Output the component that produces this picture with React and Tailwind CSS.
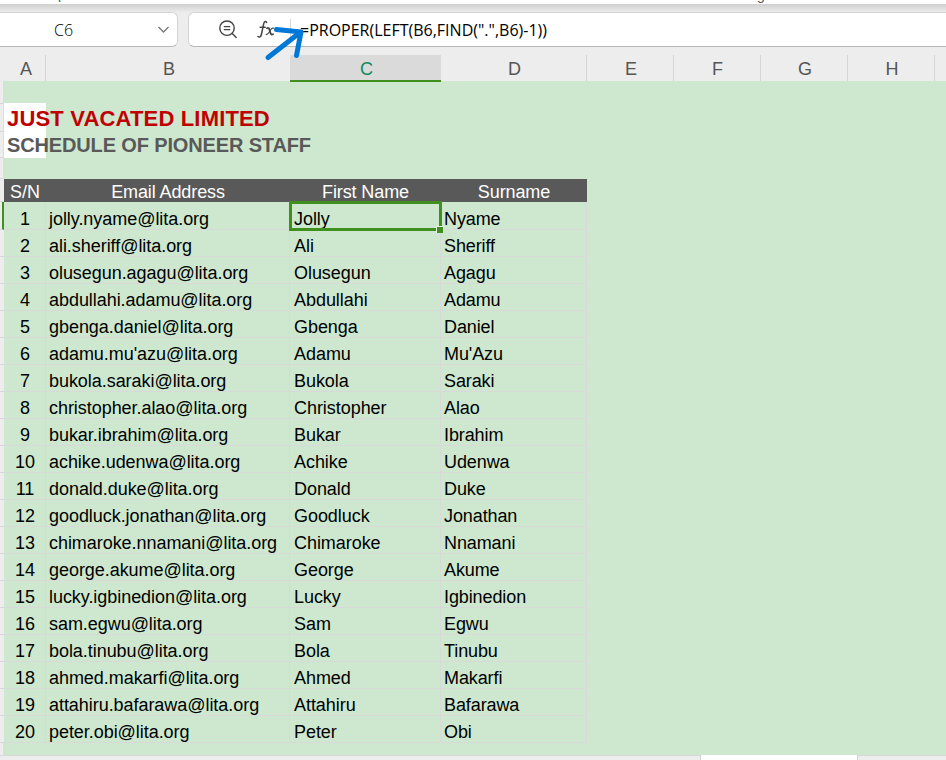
import React from "react";

const staff = [
  ["jolly.nyame", "Jolly", "Nyame"],
  ["ali.sheriff", "Ali", "Sheriff"],
  ["olusegun.agagu", "Olusegun", "Agagu"],
  ["abdullahi.adamu", "Abdullahi", "Adamu"],
  ["gbenga.daniel", "Gbenga", "Daniel"],
  ["adamu.mu'azu", "Adamu", "Mu'Azu"],
  ["bukola.saraki", "Bukola", "Saraki"],
  ["christopher.alao", "Christopher", "Alao"],
  ["bukar.ibrahim", "Bukar", "Ibrahim"],
  ["achike.udenwa", "Achike", "Udenwa"],
  ["donald.duke", "Donald", "Duke"],
  ["goodluck.jonathan", "Goodluck", "Jonathan"],
  ["chimaroke.nnamani", "Chimaroke", "Nnamani"],
  ["george.akume", "George", "Akume"],
  ["lucky.igbinedion", "Lucky", "Igbinedion"],
  ["sam.egwu", "Sam", "Egwu"],
  ["bola.tinubu", "Bola", "Tinubu"],
  ["ahmed.makarfi", "Ahmed", "Makarfi"],
  ["attahiru.bafarawa", "Attahiru", "Bafarawa"],
  ["peter.obi", "Peter", "Obi"],
];

const columns = [
  ["A", "w-[46px] pl-[7px]"],
  ["B", "w-[244px] pl-[2px]"],
  ["C", "w-[151px] pl-[2px]"],
  ["D", "w-[146px] pl-[2px]"],
  ["E", "w-[87px] pl-[2px]"],
  ["F", "w-[87px] pl-px"],
  ["G", "w-[87px] pl-[2px]"],
  ["H", "w-[87px] pl-[2px]"],
];

function FormulaBar() {
  return (
    <div className="relative flex h-[43px] gap-[10px] bg-gradient-to-b from-[#cfcfcf] via-[#ededed] via-20% to-[#ededed] pt-2">
      <div className="flex h-[35px] w-[178px] items-center rounded-r-[6px] border border-l-0 border-[#d4d4d4] border-b-[#b8b8b8] bg-white pl-[54px] pr-[7px]">
        <span className="flex-1 font-['Open_Sans',sans-serif] text-[16px] font-light text-black">C6</span>
        <svg width="13" height="9" viewBox="0 0 13 9" fill="none" stroke="#777" strokeWidth="1.3">
          <path d="M1.5 2 6.5 7 11.5 2" />
        </svg>
      </div>
      <div className="flex h-[35px] flex-1 items-center rounded-l-[6px] border border-r-0 border-[#d4d4d4] border-b-[#b8b8b8] bg-white pl-[29px]">
        <svg width="20" height="20" viewBox="0 0 20 20" fill="none" stroke="#444" strokeWidth="1.4" strokeLinecap="round">
          <circle cx="9" cy="8.2" r="7.2" />
          <path d="M6.3 6.6h5.4M6.3 9.6h5.4M14.2 13.6l4 4" />
        </svg>
        <svg className="ml-[19px]" width="18" height="21" viewBox="0 0 18 21" fill="none" stroke="#444" strokeLinecap="round">
          <path d="M9.6 3.4C9.3 2 7.4 1.9 6.8 4.4L4.4 15.5C3.8 18.2 2.2 18.6 0.9 17.5M3.2 8.2h5" strokeWidth="1.5" />
          <path d="M10 9.2c1.6-1 2.2.1 2.7 2.2s1.1 5.3 3.3 3.9" strokeWidth="1.8" />
          <path d="M16.6 9.3c-1.5-.8-2.6.7-3.7 2.8s-2.1 4-3.8 3.2" strokeWidth="1.1" />
        </svg>
        <div className="ml-[15px] h-[22px] w-px bg-[#d6d6d6]" />
        <span className="ml-[9px] whitespace-pre font-['Open_Sans',sans-serif] text-[16px] text-black">=PROPER(LEFT(B6,FIND(".",B6)-1))</span>
      </div>
      <svg className="absolute left-[262px] top-[18px] z-10" width="46" height="46" viewBox="262 22 46 46" fill="none" stroke="#0078d7" strokeWidth="5" strokeLinecap="round" strokeLinejoin="round">
        <path d="M268 57.5 300 32.5M276.5 29.5l24.5 2.5-4.5 23.5" />
      </svg>
    </div>
  );
}

function ColumnHeaders() {
  return (
    <div className="flex h-[34px] bg-[#ededed] pt-2 text-[18px] leading-[28px] text-[#555]">
      {columns.map(([letter, width]) => (
        <div
          key={letter}
          className={`${width} shrink-0 text-center ${
            letter === "C"
              ? "h-[27px] border-b-2 border-[#3f901e] bg-[#dadada] text-[#0f8a5f]"
              : letter === "B"
                ? "h-[26px]"
                : "h-[26px] border-r border-[#d5d5d5]"
          }`}
        >
          {letter}
        </div>
      ))}
    </div>
  );
}

function StaffRow({ person, index }) {
  const [address, first, last] = person;
  const active = index === 0;
  const line = "border-b border-r border-[#d9d9d9]";
  const pad = active ? "pt-[3px]" : "pt-[2px]";
  return (
    <div className={`flex text-[18px] leading-[28px] text-black ${active ? "h-[28px]" : "h-[27px]"}`}>
      <div className={`w-[4px] shrink-0 border-b border-[#d6d6d6] bg-[#ededed] ${active ? "border-r-2 border-r-[#3f901e]" : ""}`} />
      <div className={`w-[42px] pl-px text-center tracking-[-0.1px] ${line} ${pad}`}>{index + 1}</div>
      <div className={`w-[244px] pl-[3px] tracking-[-0.05px] ${line} ${pad}`}>{address}@lita.org</div>
      <div className={`relative w-[151px] pl-[4px] tracking-[-0.05px] ${line} ${pad}`}>
        {first}
        {active && (
          <>
            <div className="absolute -left-px -top-px h-[30px] w-[153px] border-[3px] border-[#3f901e]" />
            <div className="absolute -right-[3px] top-[24px] z-10 h-[7px] w-[7px] border-l border-t border-[#eaf5e8] bg-[#3f901e]" />
          </>
        )}
      </div>
      <div className={`w-[146px] pl-[3px] tracking-[-0.1px] ${line} ${pad}`}>{last}</div>
    </div>
  );
}

export default function App() {
  return (
    <div className="flex h-[760px] w-[946px] flex-col overflow-hidden bg-[#cde8cf] font-['Liberation_Sans',Arial,sans-serif]">
      <div className="relative h-[4px] shrink-0 overflow-hidden bg-white">
        <span className="absolute left-[58px] top-[-14px] text-[14px] leading-[16px] text-[#555]">p</span>
        <span className="absolute left-[757px] top-[-12px] text-[14px] leading-[14px] text-[#555]">g</span>
      </div>
      <FormulaBar />
      <ColumnHeaders />
      <div className="flex h-[98px] shrink-0">
        <div className="w-[3px] bg-[#ededed]">
          <div className="h-[23px] border-b border-[#d5d5d5]" />
          <div className="h-[28px] border-b border-[#d5d5d5]" />
          <div className="h-[26px] border-b border-[#d5d5d5]" />
          <div className="h-[21px] border-b border-[#d5d5d5]" />
        </div>
        <div className="pl-px pt-[22px]">
          <div className="h-[55px] w-[42px] whitespace-nowrap bg-white pl-[3px] font-bold">
            <div className="h-[28px] text-[22px] leading-[31px] tracking-[0.17px] text-[#c00000]">JUST VACATED LIMITED</div>
            <div className="h-[27px] text-[20px] leading-[28px] tracking-[-0.14px] text-[#595959]">SCHEDULE OF PIONEER STAFF</div>
          </div>
        </div>
      </div>
      <div className="flex h-[23px] shrink-0 text-center text-[18px] leading-[26px] text-white">
        <div className="w-[4px] border-b border-[#d5d5d5] bg-[#ededed]" />
        <div className="w-[42px] bg-[#595959]">S/N</div>
        <div className="w-[244px] bg-[#595959] tracking-[-0.1px]">Email Address</div>
        <div className="w-[151px] bg-[#595959] tracking-[-0.1px]">First Name</div>
        <div className="w-[146px] bg-[#595959] tracking-[-0.1px]">Surname</div>
      </div>
      {staff.map((person, i) => (
        <StaffRow key={person[0]} person={person} index={i} />
      ))}
      <div className="h-[12px] w-[3px] shrink-0 bg-[#ededed]" />
      <div className="flex h-[5px] shrink-0 border-t border-[#d8d8d8] bg-[#ededed]">
        <div className="-mt-px ml-[700px] h-[5px] w-[158px] border-x border-[#d5d5d5] bg-white" />
      </div>
    </div>
  );
}
